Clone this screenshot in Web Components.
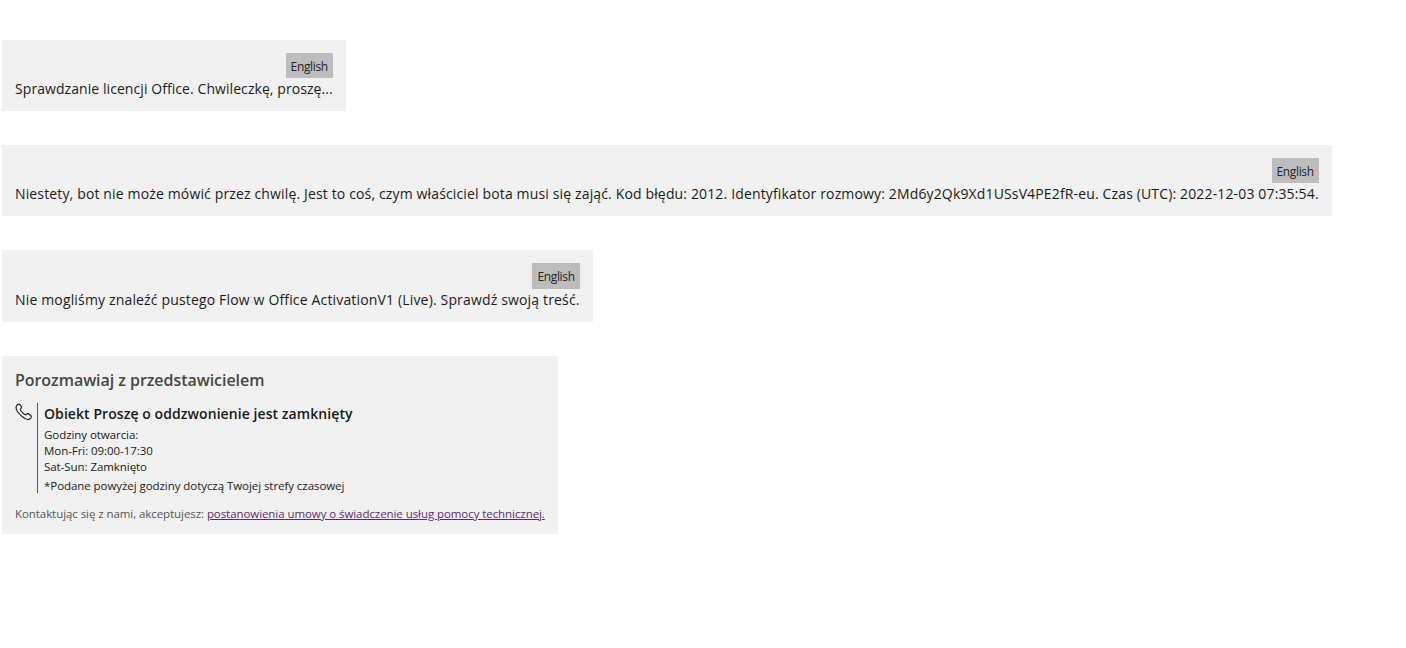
<!DOCTYPE html>
<html lang="pl">
<head>
<meta charset="utf-8">
<title>Czat</title>
<style>
html,body{margin:0;background:#fff}
body{padding:40px 0 0 2px;font-family:"Open Sans","Noto Sans",sans-serif;color:#1a1a1a;display:flex;flex-direction:column;align-items:flex-start;gap:34px}
</style>
</head>
<body>
<bot-message style="--sp:.07px">Sprawdzanie licencji Office. Chwileczkę, proszę...</bot-message>
<bot-message style="--sp:.145px">Niestety, bot nie może mówić przez chwilę. Jest to coś, czym właściciel bota musi się zająć. Kod błędu: 2012. Identyfikator rozmowy: 2Md6y2Qk9Xd1USsV4PE2fR-eu. Czas (UTC): 2022-12-03 07:35:54.</bot-message>
<bot-message style="--sp:.16px;--h:72px;--bh:26px">Nie mogliśmy znaleźć pustego Flow w Office ActivationV1 (Live). Sprawdź swoją treść.</bot-message>
<contact-card heading="Porozmawiaj z przedstawicielem">
  <callback-option title-text="Obiekt Proszę o oddzwonienie jest zamknięty">
    <div>Godziny otwarcia:</div>
    <div>Mon-Fri: 09:00-17:30</div>
    <div>Sat-Sun: Zamknięto</div>
    <div slot="note">*Podane powyżej godziny dotyczą Twojej strefy czasowej</div>
  </callback-option>
</contact-card>

<template id="msg-tpl">
<style>
:host{display:block;background:#f1f1f1;padding:13px;box-sizing:border-box;height:var(--h,71px)}
.top{display:flex;justify-content:flex-end}
button{all:unset;box-sizing:border-box;height:var(--bh,25px);padding:0 5px;background:#bdbdbd;color:#222;font:12px/27px "Open Sans",sans-serif;letter-spacing:-.36px}
p{margin:0;font-size:14px;line-height:21px;white-space:nowrap;letter-spacing:var(--sp,0);color:#1c1c1c}
</style>
<div class="top"><button>English</button></div>
<p><slot></slot></p>
</template>

<template id="contact-tpl">
<style>
:host{display:block;background:#f1f1f1;width:556px;height:178px;box-sizing:border-box;padding:12px 13px 0}
h2{margin:0 0 11px;font-size:16px;line-height:24px;font-weight:600;color:#484644;letter-spacing:-.05px}
.terms{margin:13px 0 0;font-size:11.5px;line-height:16px;color:#555;letter-spacing:-.07px;white-space:nowrap}
a{color:#5c2d6e;text-decoration:underline}
</style>
<h2></h2>
<slot></slot>
<p class="terms">Kontaktując się z nami, akceptujesz: <a href="#">postanowienia umowy o świadczenie usług pomocy technicznej.</a></p>
</template>

<template id="option-tpl">
<style>
:host{display:flex}
svg{width:18px;height:18px;flex:none;margin-right:4px;display:block}
.body{border-left:1px solid #5a5a5a;padding-left:6px;height:90px;color:#222;font-size:11.5px;line-height:16px;letter-spacing:-.06px;white-space:nowrap}
.t{font-size:14px;line-height:21px;font-weight:600;color:#1a1a1a;letter-spacing:.07px;margin-bottom:3px}
.n{margin-top:3px}
</style>
<svg viewBox="0 0 18 18" fill="none" stroke="#222" stroke-width="1.2" stroke-linejoin="round"><path d="M1.300 3.200C2 1.800 3.300 1 4.200 1.200c.8.200 2.300 2.300 2.400 3 .1.700-1.200 1.500-1.300 2.200-.1 1.200 3.900 5.400 5.200 5.400.8 0 1.500-1.300 2.300-1.200.8.100 3.300 2 3.500 2.800.2 1-.9 2.600-2.500 3-1.600.4-3.800-.4-6.400-2.600C4.700 11.500 2.200 8.600 1.400 6.400 1 5.200.9 4 1.300 3.200Z"/></svg>
<div class="body">
  <div class="t"></div>
  <slot></slot>
  <div class="n"><slot name="note"></slot></div>
</div>
</template>

<script>
function stamp(el,id){
  var root=el.attachShadow({mode:'open'});
  root.append(document.getElementById(id).content.cloneNode(true));
  return root;
}
class BotMessage extends HTMLElement{
  constructor(){super();stamp(this,'msg-tpl');}
}
class ContactCard extends HTMLElement{
  constructor(){super();stamp(this,'contact-tpl');}
  connectedCallback(){this.shadowRoot.querySelector('h2').textContent=this.getAttribute('heading');}
}
class CallbackOption extends HTMLElement{
  constructor(){super();stamp(this,'option-tpl');}
  connectedCallback(){this.shadowRoot.querySelector('.t').textContent=this.getAttribute('title-text');}
}
customElements.define('bot-message',BotMessage);
customElements.define('contact-card',ContactCard);
customElements.define('callback-option',CallbackOption);
</script>
</body>
</html>
